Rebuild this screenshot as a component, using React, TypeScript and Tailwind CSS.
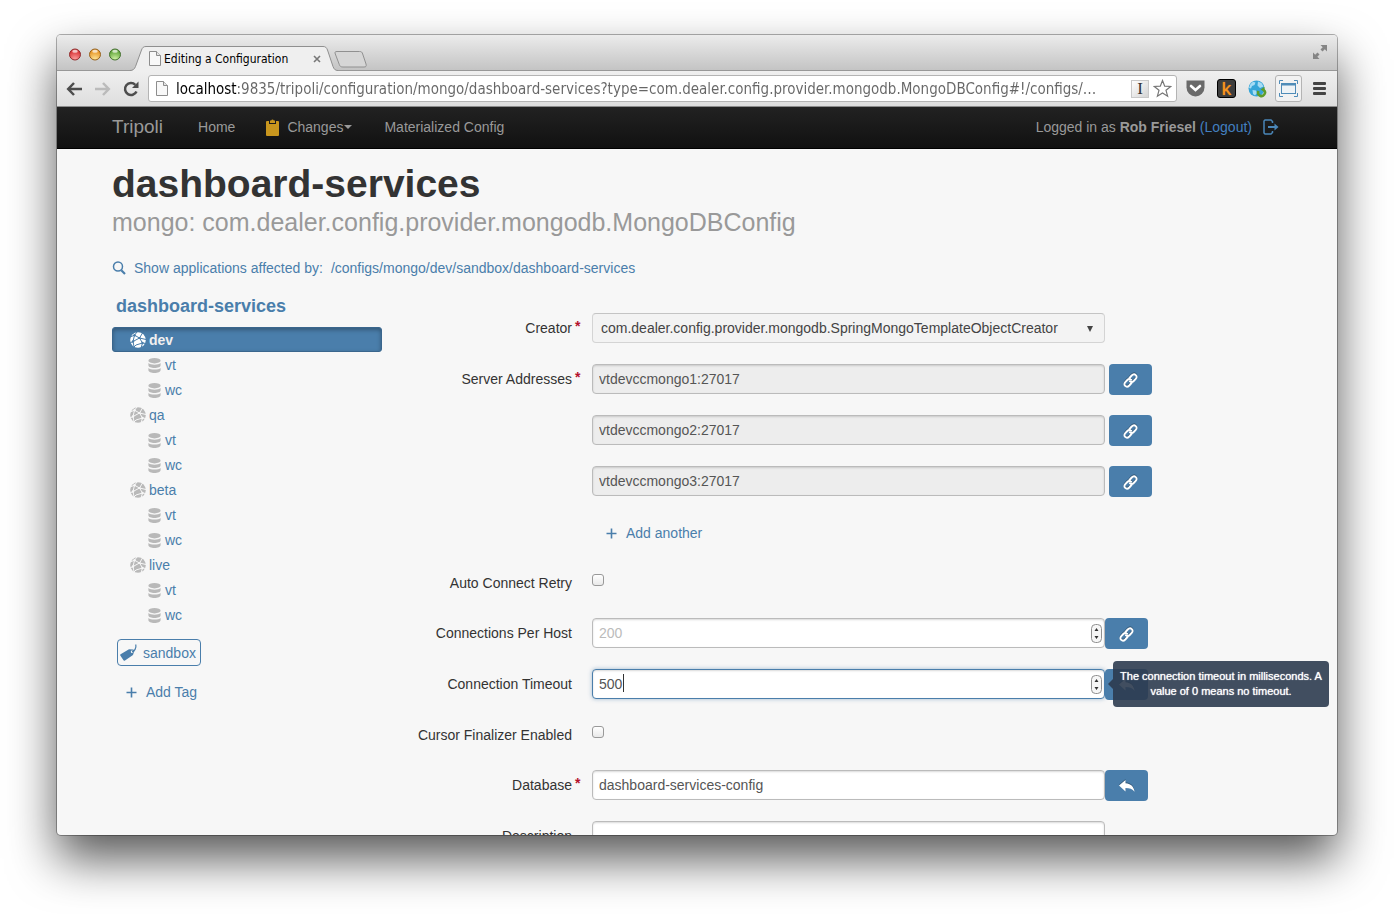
import type { ReactNode } from 'react';

const ui = "font-['DejaVu_Sans_Condensed','Noto_Sans',sans-serif]";

function PageIcon() {
  return (
    <svg width="12" height="15" viewBox="0 0 12 15" className="shrink-0" aria-hidden="true">
      <path d="M.5 .5h7l4 4v10H.5z" fill="#f8f8f8" stroke="#8d8d8d" />
      <path d="M7.500 .5v4h4" fill="#e4e4e4" stroke="#8d8d8d" />
    </svg>
  );
}

function Light({ id, from, to, ring }: { id: string; from: string; to: string; ring: string }) {
  return (
    <svg width="12" height="13" viewBox="0 0 12 13" aria-hidden="true">
      <defs>
        <radialGradient id={id} cx="50%" cy="95%" r="75%">
          <stop offset="0" stopColor={to} />
          <stop offset="1" stopColor={from} />
        </radialGradient>
      </defs>
      <circle cx="6" cy="6.500" r="5.500" fill={`url(#${id})`} stroke={ring} />
      <ellipse cx="6" cy="3.300" rx="2.800" ry="1.500" fill="#fff" opacity=".7" />
    </svg>
  );
}

function TabStrip() {
  return (
    <div className="flex h-9 shrink-0 items-end border-b border-[#989898] bg-linear-to-b from-[#ececec] to-[#c4c4c4] pr-[9px]">
      <div className="flex h-9 w-[73px] shrink-0 items-center gap-2 pl-3 pt-1">
        <Light id="lr" from="#d9383b" to="#ffa0a0" ring="#8f2f2f" />
        <Light id="ly" from="#e8982a" to="#ffe79a" ring="#946221" />
        <Light id="lg" from="#66a83f" to="#d3f5a8" ring="#467032" />
      </div>
      <div className="relative -mb-px flex h-[25px] w-[208px] items-center pl-[19px] pr-4">
        <svg className="absolute inset-0" width="208" height="25" viewBox="0 0 208 25" aria-hidden="true">
          <path
            d="M0 24.500C3 24.500 4.500 23 5.500 20.500L11.500 4C12.500 1.500 13.500.5 16 .5H193C195.500.5 196.500 1.500 197.500 4L203 20.500C204 23 205 24.500 208 24.500V25H0z"
            fill="#efefef"
          />
          <path
            d="M0 24.500C3 24.500 4.500 23 5.500 20.500L11.500 4C12.500 1.500 13.500.5 16 .5H193C195.500.5 196.500 1.500 197.500 4L203 20.500C204 23 205 24.500 208 24.500"
            fill="none"
            stroke="#8f8f8f"
          />
        </svg>
        <div className="relative flex flex-1 items-center">
          <PageIcon />
          <span className={`ml-[3px] flex-1 whitespace-nowrap text-[12px] leading-4 text-black ${ui}`}>
            Editing a Configuration
          </span>
          <button aria-label="Close tab" className="flex size-2.5 items-center justify-center">
            <svg width="8" height="8" viewBox="0 0 8 8" stroke="#777" strokeWidth="1.600">
              <path d="M1 1l6 6M7 1L1 7" />
            </svg>
          </button>
        </div>
      </div>
      <button aria-label="New tab" className="-ml-1 mb-[2px]">
        <svg width="34" height="17" viewBox="0 0 34 17">
          <path
            d="M3 .5H25.500C27.500.5 28 1 28.700 3L32 13C32.700 15.200 32 16 30 16H9C7 16 6 15.500 5.300 13.500L1.300 3C.6 1.200 1 .5 3 .5z"
            fill="#d6d6d6"
            stroke="#909090"
          />
        </svg>
      </button>
      <button aria-label="Full screen" className="mb-[10px] ml-auto">
        <svg width="16" height="16" viewBox="0 0 16 16" fill="#858585">
          <path d="M8.500 1H15V7.500L12.800 5.300L10.500 7.500L8.500 5.500L10.700 3.200z" />
          <path d="M7.500 15H1V8.500L3.200 10.700L5.500 8.500L7.500 10.500L5.300 12.800z" />
        </svg>
      </button>
    </div>
  );
}

function Toolbar() {
  return (
    <div className="flex h-9 shrink-0 items-center border-b border-[#8c8c8c] bg-linear-to-b from-[#efefef] to-[#dedede] pl-[9px] pr-[11px]">
      <button aria-label="Back" className="mr-3">
        <svg width="17" height="14" viewBox="0 0 17 14" fill="none" stroke="#4d4d4d" strokeWidth="2.500">
          <path d="M8 1L2.200 7L8 13M2.500 7H16" />
        </svg>
      </button>
      <button aria-label="Forward" className="mr-3">
        <svg width="16" height="14" viewBox="0 0 16 14" fill="none" stroke="#bbb" strokeWidth="2.500">
          <path d="M8 1L13.800 7L8 13M13.500 7H0" />
        </svg>
      </button>
      <button aria-label="Reload" className="mr-[9px]">
        <svg width="16" height="16" viewBox="0 0 16 16">
          <path d="M13.500 10.500A6 6 0 1 1 12.300 3.800" fill="none" stroke="#4d4d4d" strokeWidth="2.500" />
          <path d="M15.500 .5V7H9z" fill="#4d4d4d" />
        </svg>
      </button>
      <div className="flex h-[27px] min-w-0 flex-1 items-center rounded-[3px] border border-[#b4b4b4] bg-white pl-[7px] pr-1">
        <PageIcon />
        <input
          aria-label="Address"
          className={`ml-2 min-w-0 flex-1 bg-[linear-gradient(90deg,#000_61px,#666_61px)] bg-clip-text text-[15px] leading-6 text-transparent outline-none ${ui}`}
          defaultValue="localhost:9835/tripoli/configuration/mongo/dashboard-services?type=com.dealer.config.provider.mongodb.MongoDBConfig#!/configs/…"
        />
        <button
          aria-label="Text extension"
          className="mr-1 h-[18px] w-[18px] border border-[#c8c8c8] bg-linear-to-br from-white to-[#d4d4d4] font-['Liberation_Serif',serif] text-[17px] leading-4 text-[#333]"
        >
          I
        </button>
        <button aria-label="Bookmark">
          <svg width="19" height="19" viewBox="0 0 19 19" fill="#fff" stroke="#777" strokeWidth="1.200">
            <path d="M9.500 1.500L11.700 7.200L17.700 7.500L13 11.300L14.600 17.200L9.500 13.900L4.400 17.200L6 11.300L1.300 7.500L7.300 7.200z" />
          </svg>
        </button>
      </div>
      <div className="ml-[9px] flex shrink-0 items-center gap-3">
        <button aria-label="Pocket">
          <svg width="19" height="17" viewBox="0 0 19 17">
            <path d="M.5 .5h18V7.500a9 9 0 0 1-18 0z" fill="#6a6a6a" />
            <path d="M5 6l4.500 4L14 6" fill="none" stroke="#fff" strokeWidth="2.600" strokeLinecap="round" />
          </svg>
        </button>
        <button
          aria-label="K extension"
          className="h-[19px] w-[19px] rounded-[3px] border border-black bg-[#3d3d3d] text-[19px] leading-[17px] text-[#f7931d] [text-shadow:0_0_1px_#f7931d]"
        >
          k
        </button>
        <button aria-label="Globe extension">
          <svg width="19" height="18" viewBox="0 0 19 18">
            <circle cx="8.500" cy="8.500" r="8" fill="#35a5d8" />
            <path d="M2.500 4L5 1.800L7.500 2.500L6.500 5L4 6L3 8.500L1 8zM10 1.500L13.500 3L15.500 6.500L12 8L9.500 5.500zM4.500 10L8 10.500L9 13L7 15.500L5 14z" fill="#a6dcf4" />
            <path d="M10.500 11A3.400 3.400 0 1 0 15.500 9.800" fill="none" stroke="#5d9d2c" strokeWidth="2.600" />
            <path d="M16.500 6.800V12L12.500 9.500z" fill="#5d9d2c" />
          </svg>
        </button>
      </div>
      <button
        aria-label="Window size"
        className="ml-2 flex h-[27px] w-[27px] shrink-0 items-center justify-center rounded-[3px] border border-[#b4b4b4] bg-[#f2f2f2]"
      >
        <svg width="19" height="17" viewBox="0 0 19 17" fill="none" stroke="#4f8cb8">
          <path d="M.5 4V.5H4M15 .5h3.500V4M18.500 13v3.500H15M4 16.500H.5V13" />
          <rect x="2.500" y="3.500" width="14" height="10" fill="#eef3f6" />
          <path d="M3 4.500h13" strokeWidth="2" />
        </svg>
      </button>
      <button aria-label="Menu" className="ml-[11px] flex w-[13px] shrink-0 flex-col gap-[2px]">
        <span className="h-[3px] rounded-[1px] bg-[#444]" />
        <span className="h-[3px] rounded-[1px] bg-[#444]" />
        <span className="h-[3px] rounded-[1px] bg-[#444]" />
      </button>
    </div>
  );
}

function NavBar() {
  return (
    <nav className="h-[42px] shrink-0 border-b border-black bg-linear-to-b from-[#222] to-[#111] text-[14px] text-[#999]">
      <div className="mx-auto flex h-full max-w-[1170px] items-center pb-px">
        <a href="#" className="text-[19px] leading-6">Tripoli</a>
        <a href="#" className="ml-[35px]">Home</a>
        <a href="#" className="ml-[31px] flex items-center">
          <svg width="13" height="17" viewBox="0 0 13 17" fill="#c8961e" className="mr-2" aria-hidden="true">
            <path d="M4 1.500h1.200a1.400 1.400 0 0 1 2.600 0H9V4H4z" />
            <path d="M1 2h2v3h7V2h2a1 1 0 0 1 1 1v13a1 1 0 0 1-1 1H1a1 1 0 0 1-1-1V3a1 1 0 0 1 1-1z" />
          </svg>
          Changes
          <svg width="8" height="4" viewBox="0 0 8 4" fill="#999" className="ml-px" aria-hidden="true">
            <path d="M0 0h8L4 4z" />
          </svg>
        </a>
        <a href="#" className="ml-8">Materialized Config</a>
        <div className="ml-auto mr-[3px] flex items-center">
          <span>
            Logged in as <b>Rob Friesel</b>{' '}
            <a href="#" className="text-[#4380c0]">(Logout)</a>
          </span>
          <svg width="16" height="16" viewBox="0 0 16 16" fill="none" stroke="#4a86b8" strokeWidth="1.500" className="ml-[11px]" aria-hidden="true">
            <path d="M9.500 4V2.500L8 1H2L1 2v12l1 1h6l1.500-1.500V12" />
            <path d="M5 8h8" strokeWidth="2" />
            <path d="M11.500 4.500L15.500 8l-4 3.500z" fill="#4a86b8" stroke="none" />
          </svg>
        </div>
      </div>
    </nav>
  );
}

function NetIcon({ active }: { active?: boolean }) {
  return (
    <svg width="16" height="16" viewBox="0 0 16 16" className="shrink-0" aria-hidden="true">
      <circle cx="8" cy="8" r="7.800" className={active ? 'fill-white' : 'fill-[#b9b9b9]'} />
      <g fill="none" strokeWidth="1" className={active ? 'stroke-[#4a7eab]' : 'stroke-[#f7f7f7]'}>
        <path d="M0 5L4.500 3.200L9.500 6L16 7.500M4.500 3.200L7 0M9.500 6L12.500 1M4.500 3.200L3 9.500L0 11M3 9.500L9.500 6L12.500 11L16 11.500M3 9.500L4 14.500M12.500 11L6 13L4 15M12.500 11L11 16" />
      </g>
      <g className={active ? 'fill-[#4a7eab]' : 'fill-[#f7f7f7]'}>
        <circle cx="4.500" cy="3.200" r="1.200" />
        <circle cx="3" cy="9.500" r="1.200" />
        <circle cx="9.500" cy="6" r="1.100" />
        <circle cx="12.500" cy="11" r="1.200" />
      </g>
    </svg>
  );
}

function DbIcon() {
  return (
    <svg width="13" height="15" viewBox="0 0 13 15" fill="#b9b9b9" className="mt-px shrink-0" aria-hidden="true">
      <ellipse cx="6.500" cy="2.700" rx="6.100" ry="2.700" />
      <path d="M.4 5c1 1.200 3.400 1.700 6.100 1.700s5.100-.5 6.100-1.700v2.200c0 1.700-2.700 2.800-6.100 2.800S.4 8.900.4 7.200z" />
      <path d="M.4 9.900c1 1.200 3.400 1.700 6.100 1.700s5.100-.5 6.100-1.700v2c0 1.800-2.700 3-6.100 3S.4 13.700.4 11.900z" />
    </svg>
  );
}

function PlusIcon() {
  return (
    <svg width="11" height="11" viewBox="0 0 11 11" stroke="#4a7eab" strokeWidth="1.600" aria-hidden="true">
      <path d="M5.500 .5v10M.5 5.500h10" />
    </svg>
  );
}

function Sidebar() {
  return (
    <aside className="w-[270px] shrink-0 text-[#4a7eab]">
      <h2 className="pl-1 text-[18px] font-bold leading-5">
        <a href="#">dashboard-services</a>
      </h2>
      <ul className="mt-[11px]">
        {['dev', 'qa', 'beta', 'live'].map((env) => {
          const active = env === 'dev';
          return (
            <li key={env}>
              <a
                href="#"
                className={
                  active
                    ? 'flex h-[25px] items-center gap-[3px] rounded-[3px] border border-[#3a668d] bg-[#4a7eab] pl-[17px] font-bold text-[#f0f0f0] shadow-[inset_0_2px_4px_rgba(0,0,0,0.3)]'
                    : 'flex h-[25px] items-center gap-[3px] pl-[18px]'
                }
              >
                <NetIcon active={active} />
                {env}
              </a>
              <ul>
                {['vt', 'wc'].map((site) => (
                  <li key={site}>
                    <a href="#" className="flex h-[25px] items-center gap-1 pl-9">
                      <DbIcon />
                      {site}
                    </a>
                  </li>
                ))}
              </ul>
            </li>
          );
        })}
      </ul>
      <a
        href="#"
        className="ml-[5px] mt-3 inline-flex h-[27px] items-center gap-[6px] rounded-[4px] border border-[#4a7eab] pl-[2px] pr-1"
      >
        <svg width="17" height="17" viewBox="0 0 17 17" aria-hidden="true">
          <path
            fillRule="evenodd"
            fill="#4a7eab"
            d="M.6 10.200L9 5.200L13 5.500C14 5.600 14.400 6.200 14.200 7.200L13 11L5 16.400C4.300 16.800 3.700 16.700 3.300 16L.3 11.600C0 11 .1 10.500 .6 10.200zM12 6.600a1.200 1.200 0 1 0 0 2.400a1.200 1.200 0 0 0 0-2.400z"
          />
          <path d="M12 7.800C14.500 7.500 16.500 4 15.800 .5" fill="none" stroke="#4a7eab" strokeWidth="1.200" />
        </svg>
        sandbox
      </a>
      <button className="ml-[14px] mt-4 flex h-5 items-center gap-[9px]">
        <PlusIcon />
        Add Tag
      </button>
    </aside>
  );
}

function Field({ label, id, required, check, children }: { label?: string; id?: string; required?: boolean; check?: boolean; children: ReactNode }) {
  return (
    <div className={check ? 'mb-5 flex h-[30px] items-start' : 'mb-5 flex h-[31px] items-start'}>
      <div className="relative mr-5 w-40 shrink-0 pt-[5px] text-right leading-5 text-[#333]">
        {label && <label htmlFor={id}>{label}</label>}
        {required && <span className="absolute left-full top-[3px] pl-[3px] font-bold text-[#b5122c]">*</span>}
      </div>
      {children}
    </div>
  );
}

const box =
  'h-[30px] w-full rounded-[4px] border border-[#bbb] px-[6px] text-[14px] text-[#555] outline-none shadow-[inset_0_1px_2px_rgba(0,0,0,0.15)]';

function ActionButton({ kind, gap }: { kind: 'link' | 'reply'; gap?: boolean }) {
  return (
    <button
      type="button"
      aria-label={kind === 'link' ? 'Link value' : 'Revert value'}
      className={`${gap ? 'ml-1' : ''} flex h-[31px] w-[43px] shrink-0 items-center justify-center rounded-[4px] bg-[#4a7eab]`}
    >
      {kind === 'link' ? (
        <svg width="15" height="15" viewBox="0 0 15 15" fill="none" stroke="#fff" strokeWidth="1.900" strokeLinecap="round" className="mt-px drop-shadow-[0_-1px_0_rgba(0,0,0,0.3)]">
          <path d="M6.500 5L8.700 2.500C10 1.200 11.700 1.100 12.800 2.100C13.900 3.100 13.800 4.700 12.700 5.900L10.700 8C9.500 9.200 8 9.200 6.900 8.200" />
          <path d="M8.500 10L6.300 12.500C5 13.800 3.300 13.900 2.200 12.900C1.100 11.900 1.200 10.300 2.300 9.100L4.300 7C5.500 5.800 7 5.800 8.100 6.800" />
        </svg>
      ) : (
        <svg width="16" height="13" viewBox="0 0 16 13" fill="#fff" className="mt-px drop-shadow-[0_-1px_0_rgba(0,0,0,0.3)]">
          <path d="M0 5.600L6.500 0V3.300C11.500 3.500 14.800 6.500 15.600 11.800C13.500 9 10.500 8 6.500 8V11.500z" />
        </svg>
      )}
    </button>
  );
}

function NumberBox({ id, value, placeholder, focused }: { id: string; value?: string; placeholder?: string; focused?: boolean }) {
  return (
    <div className="relative w-[513px]">
      <input
        id={id}
        type="number"
        defaultValue={value}
        placeholder={placeholder}
        className={`${
          focused
            ? 'h-[30px] w-full rounded-[4px] border border-[#4a7eab] px-[6px] text-[14px] text-[#555] outline-none shadow-[inset_0_1px_2px_rgba(0,0,0,0.15),0_0_4px_rgba(74,126,171,0.5)]'
            : box
        } bg-white [appearance:textfield] placeholder:text-[#bbb] [&::-webkit-inner-spin-button]:appearance-none`}
      />
      {focused && <span className="absolute left-[31px] top-[5px] h-[18px] w-px bg-[#333]" />}
      <svg width="11" height="19" viewBox="0 0 11 19" className="absolute right-[3px] top-[6px]" aria-hidden="true">
        <rect x=".5" y=".5" width="10" height="18" rx="4" fill="#f6f6f6" stroke="#8f8f8f" />
        <path d="M5.500 4L7.500 7h-4zM5.500 15l2-3h-4z" fill="#333" />
      </svg>
    </div>
  );
}

const checkbox =
  'mt-[6px] size-3 shrink-0 appearance-none rounded-[3px] border border-[#999] bg-linear-to-b from-white to-[#e9e9e9] checked:bg-[#4a7eab]';

function ConfigForm() {
  return (
    <form className="min-w-0 flex-1 pt-[17px]">
      <Field label="Creator" id="creator" required>
        <div className="relative w-[513px]">
          <select
            id="creator"
            className="h-[30px] w-full appearance-none rounded-[4px] border border-[#d4d4d4] border-t-[#c4c4c4] bg-[#f3f3f3] pl-2 text-[14px] text-[#444]"
          >
            <option>com.dealer.config.provider.mongodb.SpringMongoTemplateObjectCreator</option>
          </select>
          <svg width="6" height="6" viewBox="0 0 6 6" fill="#444" className="pointer-events-none absolute right-3 top-[13px]" aria-hidden="true">
            <path d="M0 0h6L3 6z" />
          </svg>
        </div>
      </Field>
      {[1, 2, 3].map((n) => (
        <Field key={n} label={n === 1 ? 'Server Addresses' : undefined} id="server-1" required={n === 1}>
          <div className="w-[513px]">
            <input
              id={`server-${n}`}
              aria-label={n === 1 ? undefined : `Server address ${n}`}
              readOnly
              defaultValue={`vtdevccmongo${n}:27017`}
              className={`${box} bg-[#ededed]`}
            />
          </div>
          <ActionButton kind="link" gap />
        </Field>
      ))}
      <Field>
        <button type="button" className="ml-[14px] mt-[6px] flex h-5 items-center gap-[9px] text-[#4a7eab]">
          <PlusIcon />
          Add another
        </button>
      </Field>
      <Field label="Auto Connect Retry" id="retry" check>
        <input id="retry" type="checkbox" className={checkbox} />
      </Field>
      <Field label="Connections Per Host" id="per-host">
        <NumberBox id="per-host" placeholder="200" />
        <ActionButton kind="link" />
      </Field>
      <Field label="Connection Timeout" id="timeout">
        <NumberBox id="timeout" value="500" focused />
        <div className="relative">
          <ActionButton kind="reply" />
          <div
            role="tooltip"
            className="absolute -top-2 left-2 w-[216px] rounded-[4px] bg-[#2c3b4f]/90 px-1 py-2 text-center text-[11px] leading-[15px] text-white [text-shadow:0_0_1px_#fff]"
          >
            The connection timeout in milliseconds. A value of 0 means no timeout.
            <svg width="5" height="10" viewBox="0 0 5 10" className="absolute right-full top-[18px]" aria-hidden="true">
              <path d="M5 0v10L0 5z" fill="#2c3b4f" fillOpacity=".9" />
            </svg>
          </div>
        </div>
      </Field>
      <Field label="Cursor Finalizer Enabled" id="finalizer" check>
        <input id="finalizer" type="checkbox" className={checkbox} />
      </Field>
      <Field label="Database" id="database" required>
        <div className="w-[513px]">
          <input id="database" defaultValue="dashboard-services-config" className={`${box} bg-white`} />
        </div>
        <ActionButton kind="reply" />
      </Field>
      <Field label="Description" id="description">
        <div className="w-[513px]">
          <input id="description" className={`${box} bg-white`} />
        </div>
      </Field>
    </form>
  );
}

export default function App() {
  return (
    <div className="flex h-screen flex-col overflow-hidden bg-white px-[57px] pb-[79px] pt-[35px] font-['Liberation_Sans',Arial,sans-serif] text-[14px] leading-5">
      <div className="flex min-h-0 flex-1 flex-col overflow-hidden rounded-[4px] bg-[#f7f7f7] shadow-[0_0_0_1px_rgba(0,0,0,0.3),0_24px_48px_rgba(0,0,0,0.66)]">
        <TabStrip />
        <Toolbar />
        <NavBar />
        <main className="min-h-0 flex-1 overflow-hidden">
          <div className="mx-auto max-w-[1170px] pt-4">
            <h1 className="text-[39px] font-bold leading-[38px] text-[#333]">dashboard-services</h1>
            <p className="text-[25px] leading-[38px] text-[#999]">
              mongo: com.dealer.config.provider.mongodb.MongoDBConfig
            </p>
            <a href="#" className="mt-[17px] flex h-5 items-center text-[#4a7eab]">
              <svg width="14" height="14" viewBox="0 0 14 14" fill="none" stroke="#4a7eab" className="mr-2" aria-hidden="true">
                <circle cx="6" cy="5.500" r="4.500" strokeWidth="1.500" />
                <path d="M9.300 9.300L13 13" strokeWidth="2.200" />
              </svg>
              <span>Show applications affected by:</span>
              <span className="ml-2">/configs/mongo/dev/sandbox/dashboard-services</span>
            </a>
            <div className="mt-[18px] flex gap-[30px]">
              <Sidebar />
              <ConfigForm />
            </div>
          </div>
        </main>
      </div>
    </div>
  );
}
